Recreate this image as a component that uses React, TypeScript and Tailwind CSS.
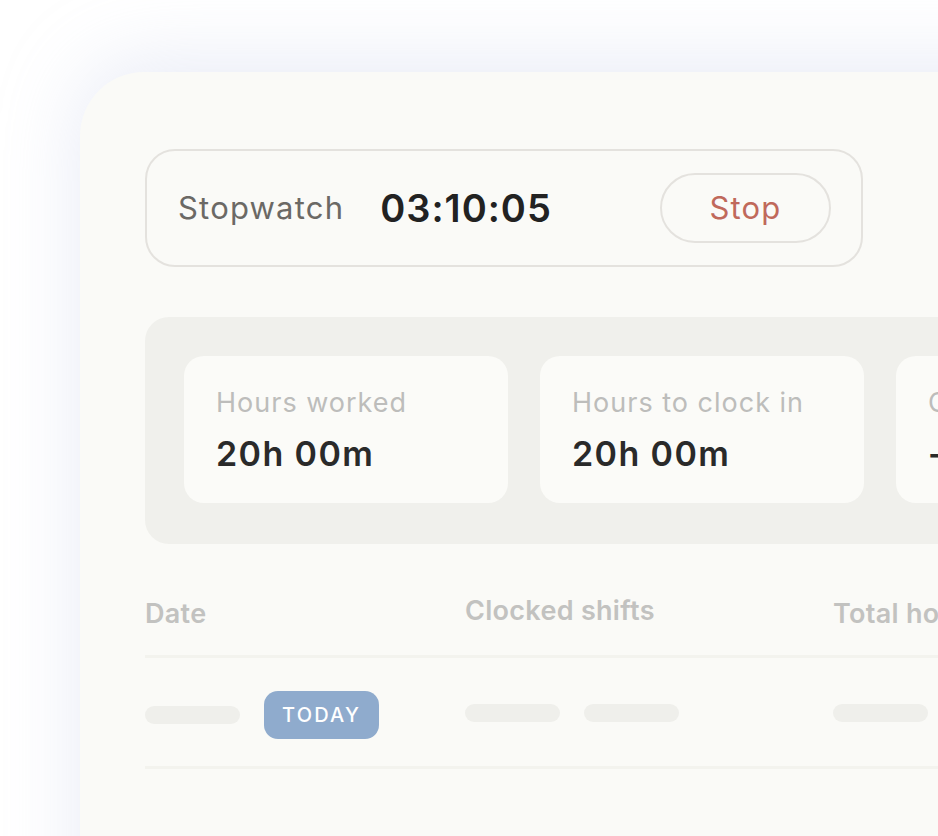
import React from "react";

const font = { fontFamily: "Inter, 'Noto Sans', sans-serif" };

function Pill() {
  return <div className="w-[95px] h-[18px] rounded-full bg-[#efefeb]" />;
}

function StatCard({ label, value }: { label: string; value: string }) {
  return (
    <div className="w-[324px] h-[147px] shrink-0 rounded-[20px] bg-[#fbfbf8] pl-[32px] pt-[31px]">
      <div className="text-[27px] leading-[32px] text-[#bdbdbb] tracking-[1px]">{label}</div>
      <div className="mt-[15px] text-[34px] leading-[40px] font-semibold text-[#2a2a2a] tracking-[1.4px]">{value}</div>
    </div>
  );
}

export default function App() {
  return (
    <div className="w-[938px] h-[836px] overflow-hidden bg-white pt-[72px] pl-[80px]" style={font}>
      <div className="w-[1000px] h-[900px] rounded-tl-[64px] bg-[#fafaf7] pt-[77px] pl-[65px] shadow-[0_-10px_80px_rgba(190,198,230,0.35)]">
        {/* stopwatch */}
        <div className="w-[718px] h-[118px] rounded-[30px] border-[2.5px] border-[#e4e2de] flex items-center pl-[31px] pr-[30px]">
          <span className="text-[31px] text-[#6b6965] tracking-[1.2px]">Stopwatch</span>
          <span className="ml-[36px] text-[38px] font-semibold text-[#222] tracking-[1px]">03:10:05</span>
          <button className="ml-auto w-[171px] h-[70px] rounded-full border-[2.5px] border-[#e4e2de] text-[31px] text-[#c0695b] tracking-[1.2px]">
            Stop
          </button>
        </div>

        {/* stats */}
        <div className="mt-[50px] h-[227px] rounded-[24px] bg-[#f0f0ec] pt-[39px] pl-[39px] flex gap-[32px]">
          <StatCard label="Hours worked" value="20h 00m" />
          <StatCard label="Hours to clock in" value="20h 00m" />
          <StatCard label="Overtime" value="--" />
        </div>

        {/* table */}
        <div className="mt-[50px] w-[900px]">
          <div className="grid grid-cols-[320px_368px_1fr] h-[61px] text-[27px] font-semibold text-[#c2c2c0] tracking-[0.3px]">
            <div>Date</div>
            <div className="-mt-[3px]">Clocked shifts</div>
            <div>Total hours</div>
          </div>
          <div className="h-[3px] bg-[#f3f3ee]" />
          <div className="grid grid-cols-[320px_368px_1fr] h-[108px] items-center">
            <div className="flex items-center gap-[24px] mt-[6px]">
              <Pill />
              <span className="h-[48px] px-[18px] rounded-[14px] bg-[#8fabcd] text-white text-[20px] font-medium tracking-[2.2px] flex items-center">
                TODAY
              </span>
            </div>
            <div className="flex items-center gap-[24px] mt-[2px]">
              <Pill />
              <Pill />
            </div>
            <div className="mt-[2px]">
              <Pill />
            </div>
          </div>
          <div className="h-[3px] bg-[#f3f3ee]" />
        </div>
      </div>
    </div>
  );
}
